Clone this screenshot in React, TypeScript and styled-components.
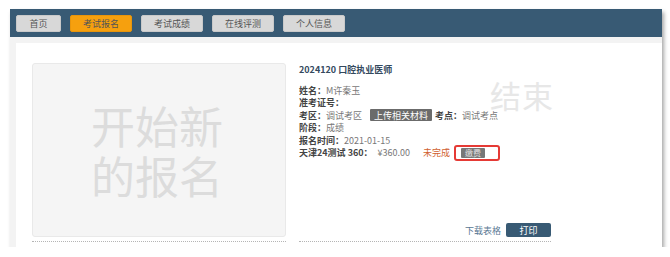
import styled, { createGlobalStyle } from "styled-components";

const GlobalStyle = createGlobalStyle`
  html, body {
    margin: 0;
    padding: 0;
    background: #ffffff;
    font-family: "Noto Sans CJK SC", "Noto Sans", sans-serif;
  }
  * {
    box-sizing: border-box;
  }
`;

const navItems = [
  { label: "首页", wide: false, active: false },
  { label: "考试报名", wide: true, active: true },
  { label: "考试成绩", wide: true, active: false },
  { label: "在线评测", wide: true, active: false },
  { label: "个人信息", wide: true, active: false },
];

function App() {
  return (
    <>
      <GlobalStyle />
      <Frame>
        <NavBar>
          {navItems.map((item) => (
            <NavButton key={item.label} $wide={item.wide} $active={item.active}>
              {item.label}
            </NavButton>
          ))}
        </NavBar>

        <Body>
          <Panel>
            <LeftColumn>
              <NewBox>
                <NewText>
                  开始新
                  <br />
                  的报名
                </NewText>
              </NewBox>
            </LeftColumn>

            <RightColumn>
              <Stamp>结束</Stamp>
              <Title>2024120 口腔执业医师</Title>

              <InfoList>
                <InfoRow>
                  <Label>姓名：</Label>
                  <Value>M许秦玉</Value>
                </InfoRow>
                <InfoRow>
                  <Label>准考证号：</Label>
                </InfoRow>
                <InfoRow>
                  <Label>考区：</Label>
                  <Value>调试考区</Value>
                  <GrayButton $gap={8}>上传相关材料</GrayButton>
                  <Label $gap={3}>考点：</Label>
                  <Value>调试考点</Value>
                </InfoRow>
                <InfoRow>
                  <Label>阶段：</Label>
                  <Value>成绩</Value>
                </InfoRow>
                <InfoRow>
                  <Label>报名时间：</Label>
                  <Value>2021-01-15</Value>
                </InfoRow>
                <InfoRow>
                  <Label>天津24测试 360：</Label>
                  <Value $gap={5}>¥360.00</Value>
                  <Status>未完成</Status>
                  <Highlight>
                    <PayButton>缴费</PayButton>
                  </Highlight>
                </InfoRow>
              </InfoList>

              <Actions>
                <LinkText>下载表格</LinkText>
                <PrintButton>打印</PrintButton>
              </Actions>
            </RightColumn>
          </Panel>
        </Body>
      </Frame>
    </>
  );
}

export default App;

const Frame = styled.div`
  margin: 9px 0 0 10px;
  width: 652px;
  height: 238px;
  display: flex;
  flex-direction: column;
  background: #ffffff;
  box-shadow: 2px 3px 4px rgba(0, 0, 0, 0.35);
`;

const NavBar = styled.div`
  height: 28px;
  flex-shrink: 0;
  display: flex;
  align-items: center;
  gap: 9px;
  padding: 0 0 0 6px;
  background: #385a74;
`;

const NavButton = styled.div<{ $wide: boolean; $active: boolean }>`
  width: ${(p) => (p.$wide ? "62px" : "45px")};
  height: 17px;
  display: flex;
  align-items: center;
  justify-content: center;
  border-radius: 2px;
  font-size: 9px;
  color: #555555;
  background: ${(p) => (p.$active ? "#f6a00e" : "#d8d8d8")};
  border: 1px solid ${(p) => (p.$active ? "#e8950c" : "#c9c9c9")};
`;

const Body = styled.div`
  flex: 1;
  display: flex;
  padding: 6px 0 0 6px;
  background: #f3f3f3;
`;

const Panel = styled.div`
  flex: 1;
  display: flex;
  gap: 13px;
  padding: 20px 0 5px 16px;
  background: #ffffff;
`;

const LeftColumn = styled.div`
  width: 254px;
  display: flex;
  padding-bottom: 4px;
  border-bottom: 1px dotted #b5b5b5;
`;

const NewBox = styled.div`
  flex: 1;
  display: flex;
  align-items: center;
  justify-content: center;
  background: #f5f5f5;
  border: 1px solid #e9e9e9;
  border-radius: 3px;
`;

const NewText = styled.div`
  font-size: 44px;
  line-height: 50px;
  color: #dcdcdc;
  text-align: center;
  margin-right: 4px;
`;

const RightColumn = styled.div`
  position: relative;
  width: 252px;
  display: flex;
  flex-direction: column;
  padding-bottom: 4px;
  border-bottom: 1px dotted #b5b5b5;
`;

const Stamp = styled.div`
  position: absolute;
  left: 191px;
  top: 16px;
  font-size: 31px;
  line-height: 31px;
  color: #e7e7e7;
  letter-spacing: 1px;
  white-space: nowrap;
`;

const Title = styled.div`
  font-size: 9px;
  font-weight: 700;
  line-height: 13px;
  color: #34495e;
`;

const InfoList = styled.div`
  display: flex;
  flex-direction: column;
  margin-top: 8px;
`;

const InfoRow = styled.div`
  display: flex;
  align-items: center;
  height: 12.5px;
  font-size: 9px;
  white-space: nowrap;
`;

const Label = styled.span<{ $gap?: number }>`
  font-weight: 700;
  color: #444444;
  margin-left: ${(p) => p.$gap ?? 0}px;
`;

const Value = styled.span<{ $gap?: number }>`
  color: #777777;
  margin-left: ${(p) => p.$gap ?? 0}px;
`;

const GrayButton = styled.span<{ $gap?: number }>`
  display: inline-flex;
  align-items: center;
  justify-content: center;
  width: 62px;
  height: 12px;
  margin-left: ${(p) => p.$gap ?? 0}px;
  background: #6b6b6b;
  color: #ffffff;
  border-radius: 1px;
  font-size: 9px;
`;

const Status = styled.span`
  margin-left: 13px;
  color: #d0602e;
`;

const Highlight = styled.span`
  display: inline-flex;
  align-items: center;
  width: 46px;
  height: 16px;
  margin-left: 4px;
  padding-left: 5px;
  border: 2px solid #e53a35;
  border-radius: 3px;
`;

const PayButton = styled.span`
  display: inline-flex;
  align-items: center;
  justify-content: center;
  width: 24px;
  height: 10px;
  background: #777777;
  color: #e0e0e0;
  font-size: 8px;
  border-radius: 1px;
`;

const Actions = styled.div`
  margin-top: auto;
  display: flex;
  align-items: center;
  justify-content: flex-end;
  gap: 5px;
`;

const LinkText = styled.span`
  font-size: 9px;
  color: #5a7893;
`;

const PrintButton = styled.div`
  width: 45px;
  height: 14px;
  display: flex;
  align-items: center;
  justify-content: center;
  background: #385a74;
  color: #ffffff;
  font-size: 9px;
  border-radius: 2px;
`;
